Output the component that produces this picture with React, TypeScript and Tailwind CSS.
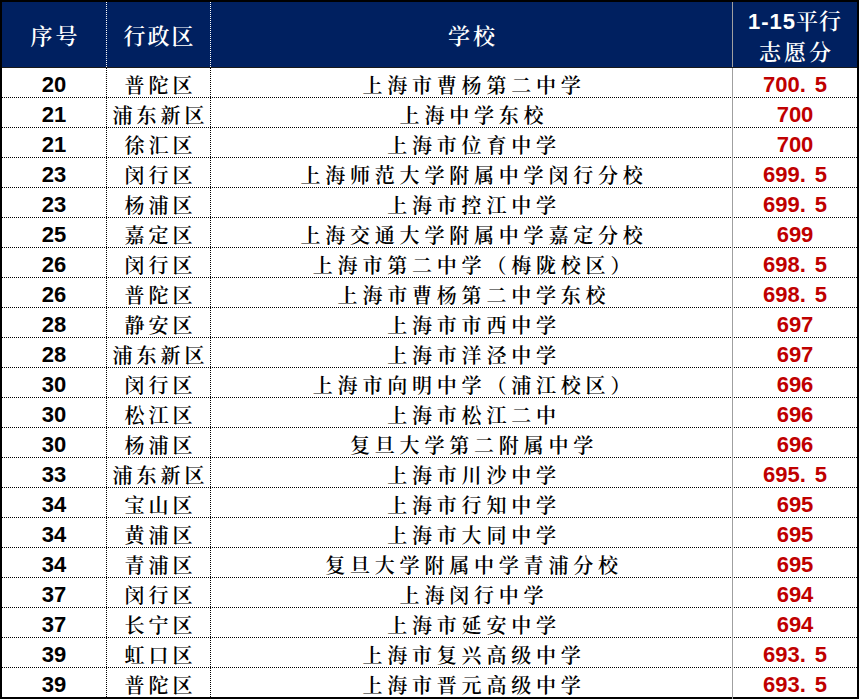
import React from "react";

const rows: [string, string, string, string][] = [
  ["20", "普陀区", "上海市曹杨第二中学", "700.5"],
  ["21", "浦东新区", "上海中学东校", "700"],
  ["21", "徐汇区", "上海市位育中学", "700"],
  ["23", "闵行区", "上海师范大学附属中学闵行分校", "699.5"],
  ["23", "杨浦区", "上海市控江中学", "699.5"],
  ["25", "嘉定区", "上海交通大学附属中学嘉定分校", "699"],
  ["26", "闵行区", "上海市第二中学（梅陇校区）", "698.5"],
  ["26", "普陀区", "上海市曹杨第二中学东校", "698.5"],
  ["28", "静安区", "上海市市西中学", "697"],
  ["28", "浦东新区", "上海市洋泾中学", "697"],
  ["30", "闵行区", "上海市向明中学（浦江校区）", "696"],
  ["30", "松江区", "上海市松江二中", "696"],
  ["30", "杨浦区", "复旦大学第二附属中学", "696"],
  ["33", "浦东新区", "上海市川沙中学", "695.5"],
  ["34", "宝山区", "上海市行知中学", "695"],
  ["34", "黄浦区", "上海市大同中学", "695"],
  ["34", "青浦区", "复旦大学附属中学青浦分校", "695"],
  ["37", "闵行区", "上海闵行中学", "694"],
  ["37", "长宁区", "上海市延安中学", "694"],
  ["39", "虹口区", "上海市复兴高级中学", "693.5"],
  ["39", "普陀区", "上海市晋元高级中学", "693.5"],
];

const cjk = "font-['Noto_Serif_CJK_SC','Noto_Sans_CJK_SC',serif]";
const num = "font-['Liberation_Sans',Arial,sans-serif]";

function Score({ v }: { v: string }) {
  const parts = v.split(".");
  if (parts.length === 1) return <>{v}</>;
  return (
    <>
      {parts[0]}
      <span className="inline-block w-[15px] text-left">.</span>
      {parts[1]}
    </>
  );
}

export default function App() {
  return (
    <div className="w-[861px] h-[699px] bg-white">
      <div className="w-[859px] border-2 border-black bg-white">
        <div className="grid grid-cols-[105px_104px_522px_1fr] h-[66px] bg-[#002060] text-white border-b border-[#1a1a1a]">
          <div className={`flex items-center justify-center border-r border-dotted border-white text-[22px] font-semibold tracking-[3px] pl-[3px] ${cjk}`}>
            序号
          </div>
          <div className={`flex items-center justify-center border-r border-dotted border-white text-[22px] font-semibold tracking-[2px] pl-[2px] ${cjk}`}>
            行政区
          </div>
          <div className={`flex items-center justify-center border-r border-[#a0a0a0] text-[22px] font-semibold tracking-[3px] pl-[3px] ${cjk}`}>
            学校
          </div>
          <div className="flex flex-col items-center justify-center leading-[29px]">
            <div className="text-[22px] font-semibold tracking-[1px]">
              <span className={`${num} font-bold`}>1-15</span>
              <span className={cjk}>平行</span>
            </div>
            <div className={`text-[22px] font-semibold tracking-[3px] pl-[3px] ${cjk}`}>志愿分</div>
          </div>
        </div>
        {rows.map((r, i) => (
          <div
            key={i}
            className={`grid grid-cols-[105px_104px_522px_1fr] ${
              i < rows.length - 1 ? "h-[30px] border-b border-dotted border-black" : "h-[29px]"
            }`}
          >
            <div className={`flex items-center justify-center border-r border-dotted border-black text-[22px] font-bold text-black ${num}`}>
              {r[0]}
            </div>
            <div className={`flex items-center justify-center border-r border-dotted border-black text-[20px] font-semibold tracking-[4px] pl-[4px] text-black ${cjk}`}>
              {r[1]}
            </div>
            <div className={`flex items-center justify-center border-r border-[#a0a0a0] text-[20px] font-semibold tracking-[4.8px] pl-[5px] text-black ${cjk}`}>
              {r[2]}
            </div>
            <div className={`flex items-center justify-center text-[22px] font-bold text-[#c00000] ${num}`}>
              <Score v={r[3]} />
            </div>
          </div>
        ))}
      </div>
    </div>
  );
}
